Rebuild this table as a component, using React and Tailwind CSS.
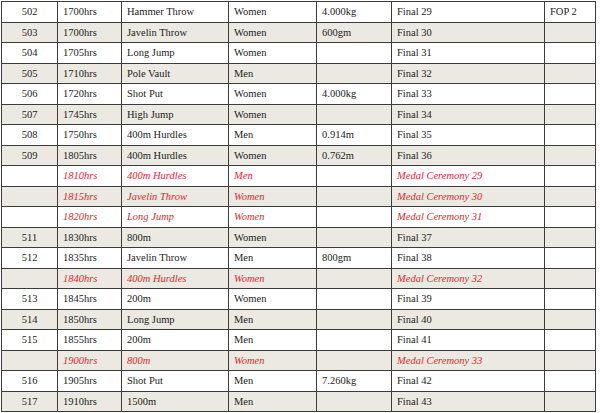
import React from 'react';

const rows = [
  ['502', '1700hrs', 'Hammer Throw', 'Women', '4.000kg', 'Final 29', 'FOP 2'],
  ['503', '1700hrs', 'Javelin Throw', 'Women', '600gm', 'Final 30', ''],
  ['504', '1705hrs', 'Long Jump', 'Women', '', 'Final 31', ''],
  ['505', '1710hrs', 'Pole Vault', 'Men', '', 'Final 32', ''],
  ['506', '1720hrs', 'Shot Put', 'Women', '4.000kg', 'Final 33', ''],
  ['507', '1745hrs', 'High Jump', 'Women', '', 'Final 34', ''],
  ['508', '1750hrs', '400m Hurdles', 'Men', '0.914m', 'Final 35', ''],
  ['509', '1805hrs', '400m Hurdles', 'Women', '0.762m', 'Final 36', ''],
  ['', '1810hrs', '400m Hurdles', 'Men', '', 'Medal Ceremony 29', '', true],
  ['', '1815hrs', 'Javelin Throw', 'Women', '', 'Medal Ceremony 30', '', true],
  ['', '1820hrs', 'Long Jump', 'Women', '', 'Medal Ceremony 31', '', true],
  ['511', '1830hrs', '800m', 'Women', '', 'Final 37', ''],
  ['512', '1835hrs', 'Javelin Throw', 'Men', '800gm', 'Final 38', ''],
  ['', '1840hrs', '400m Hurdles', 'Women', '', 'Medal Ceremony 32', '', true],
  ['513', '1845hrs', '200m', 'Women', '', 'Final 39', ''],
  ['514', '1850hrs', 'Long Jump', 'Men', '', 'Final 40', ''],
  ['515', '1855hrs', '200m', 'Men', '', 'Final 41', ''],
  ['', '1900hrs', '800m', 'Women', '', 'Medal Ceremony 33', '', true],
  ['516', '1905hrs', 'Shot Put', 'Men', '7.260kg', 'Final 42', ''],
  ['517', '1910hrs', '1500m', 'Men', '', 'Final 43', ''],
];

export default function App() {
  return (
    <div className="w-[600px] h-[413px] bg-white overflow-hidden pt-[1px] pl-[1px] font-['Liberation_Serif','Times_New_Roman',serif]">
      <div className="w-[595px] border-l border-t border-[#3c3c3c] text-[10.5px] text-[#1c1c1c]">
        {rows.map((r, i) => {
          const [no, time, event, gender, weight, round, fop, ceremony] = r;
          const shaded = i % 2 === 1;
          return (
            <div
              key={i}
              className={`grid grid-cols-[56px_64px_107px_88px_75px_153px_51px] ${i % 2 === 0 ? 'h-[21px]' : 'h-[20px]'} ${shaded ? 'bg-[#ebe9e1]' : 'bg-white'}`}
            >
              <div className="border-r border-b border-[#3c3c3c] flex items-center justify-center">{no}</div>
              {[time, event, gender, weight, round, fop].map((v, j) => (
                <div
                  key={j}
                  className={`border-r border-b border-[#3c3c3c] flex items-center pl-[5px] whitespace-nowrap ${ceremony ? 'italic text-[#e3262f]' : ''}`}
                >
                  {v}
                </div>
              ))}
            </div>
          );
        })}
      </div>
    </div>
  );
}
